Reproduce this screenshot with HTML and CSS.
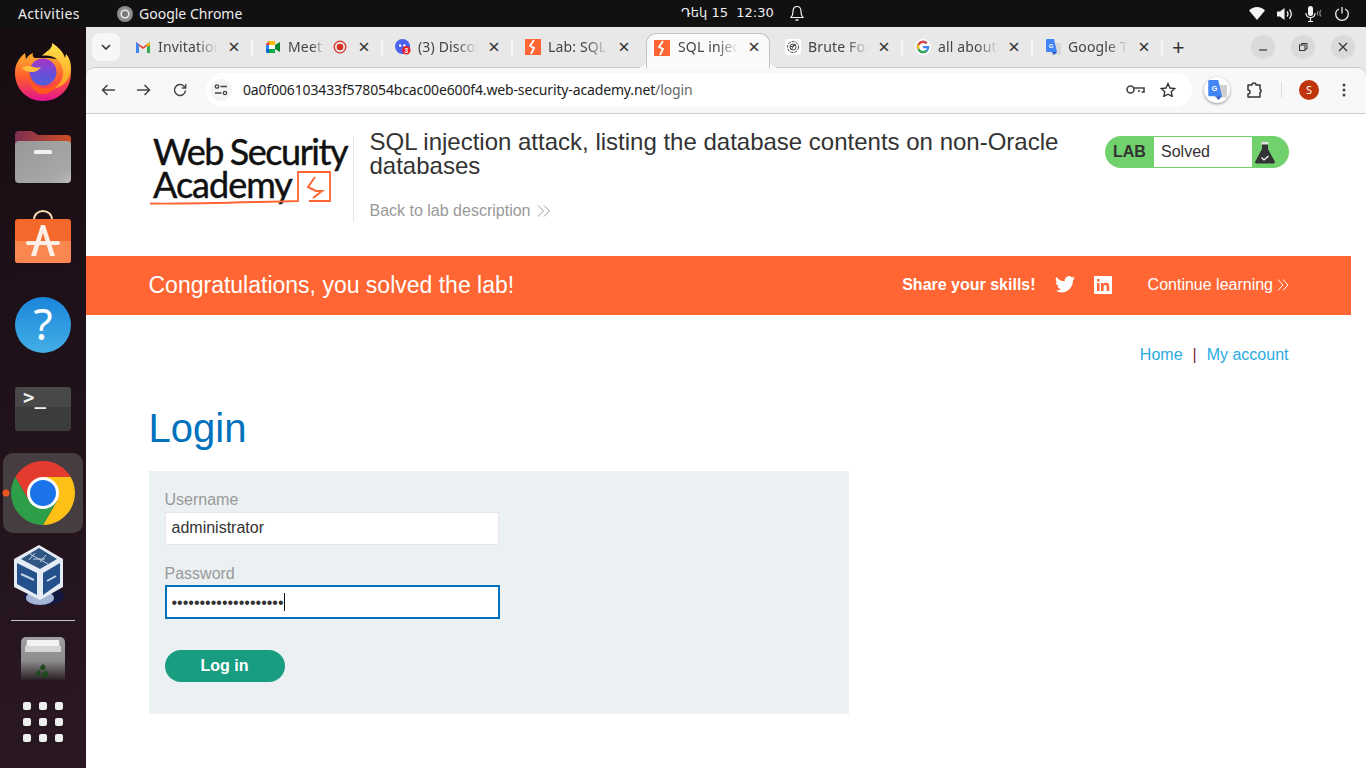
FILE: index.html
```html
<!DOCTYPE html>
<html lang="en">
<head>
<meta charset="utf-8">
<title>Login</title>
<link rel="stylesheet" href="styles.css">
</head>
<body>
<header class="topbar">
  <span class="activities">Activities</span>
  <svg class="appicon" width="16" height="16" viewBox="0 0 16 16"><circle cx="8" cy="8" r="8" fill="#8c8c8c"/><circle cx="8" cy="8" r="4.6" fill="#e8e8e8"/><circle cx="8" cy="8" r="3" fill="#777"/></svg>
  <span class="appname">Google Chrome</span>
  <span class="clock">Դեկ 15&nbsp;&nbsp;12:30</span>
  <svg class="bell" width="14" height="16" viewBox="0 0 14 16" fill="none" stroke="#f2f2f2" stroke-width="1.2"><path d="M1 12.5h12c-1.5-1.5-2-3-2-6C11 3.5 9.5 1.5 7 1.5S3 3.500 3 6.500c0 3-.5 4.500-2 6z"/><path d="M5.500 15h3" stroke-width="1.500"/></svg>
  <svg class="tray-wifi" width="16" height="13" viewBox="0 0 16 13"><path d="M0 3.500C2 1.500 5 0 8 0s6 1.500 8 3.500L8 13z" fill="#f5f5f5"/></svg>
  <svg class="tray-speaker" width="16" height="14" viewBox="0 0 16 14" fill="none" stroke="#f2f2f2" stroke-width="1.300"><path d="M0 4.500h3L7.500 1v12L3 9.500H0z" fill="#f2f2f2" stroke="none"/><path d="M10 4.500c1.200 1.500 1.200 3.500 0 5M12.500 2.500c2.200 2.700 2.200 6.300 0 9"/></svg>
  <svg class="tray-mic" width="18" height="16" viewBox="0 0 18 16" fill="none" stroke="#f2f2f2" stroke-width="1.200"><rect x="3" y="0" width="5" height="10" rx="2.500" fill="#f2f2f2" stroke="none"/><path d="M1 7c0 3 2 4.500 4.500 4.500S10 10 10 7M5.500 11.500V15M3 15.500h5"/><path d="M13 5c-1 1.500-1 3 0 4.500M16 4c-1.500 2-1.500 4.500 0 6.500" stroke="#888"/></svg>
  <svg class="tray-power" width="14" height="14" viewBox="0 0 14 14" fill="none" stroke="#f2f2f2" stroke-width="1.300"><path d="M7 0v6.500M4 2C1.800 3 .7 4.800.7 7a6.300 6.300 0 0 0 12.600 0c0-2.200-1.100-4-3.300-5"/></svg>
</header>

<div class="desktop">
  <nav class="dock">
    <div class="dock-item">
      <svg width="86" height="84" viewBox="0 0 86 84">
        <defs>
          <linearGradient id="fxbody" x1="0" y1="0" x2="0" y2="1"><stop offset="0" stop-color="#ffb02e"/><stop offset=".5" stop-color="#ff5d2e"/><stop offset="1" stop-color="#e3128f"/></linearGradient>
          <linearGradient id="fxflame" x1="0" y1="0" x2="0" y2="1"><stop offset="0" stop-color="#ffe14a"/><stop offset="1" stop-color="#ff9a1f"/></linearGradient>
          <linearGradient id="fxglobe" x1="0" y1="0" x2="0" y2="1"><stop offset="0" stop-color="#a733c9"/><stop offset=".55" stop-color="#6a4fd8"/><stop offset="1" stop-color="#4f5fd8"/></linearGradient>
        </defs>
        <path d="M15 43c0-8 3-14 10-20l1 6c2-3 4-5 7-6-1 3 0 4 2 5h14l18 3c3 4 4 8 4 12 0 16-12 28-28 28S15 59 15 43z" fill="url(#fxbody)"/>
        <path d="M52 13c1 6-6 8-10 13 10-2 20 4 21 15 1 8-4 14-10 18 10-2 18-10 18-21 0-6-2-11-5-14l-1 4c-2-7-7-11-13-15z" fill="url(#fxflame)"/>
        <circle cx="43" cy="42" r="13.500" fill="url(#fxglobe)"/>
        <path d="M22 38c4-3 9-2 12-1 2 1 4 1 7 0-2 3-5 5-9 5-4 0-7-1-10-4z" fill="#ffbe3a"/>
        <path d="M30 44c1 9 7 14 14 14 7 0 13-4 16-10-2 9-9 16-17 16s-15-9-13-20z" fill="#ff5722"/>
      </svg>
    </div>
    <div class="dock-item">
      <svg width="86" height="84" viewBox="0 0 86 84">
        <defs>
          <linearGradient id="fdback" x1="0" y1="0" x2="1" y2="0"><stop offset="0" stop-color="#7c2e52"/><stop offset="1" stop-color="#cf4e22"/></linearGradient>
          <linearGradient id="fdfront" x1="0" y1="0" x2="1" y2="1"><stop offset="0" stop-color="#979797"/><stop offset=".8" stop-color="#a8a8a8"/><stop offset="1" stop-color="#bdbdbd"/></linearGradient>
        </defs>
        <path d="M15 24v-3a4 4 0 0 1 4-4h13l6 4h29a4 4 0 0 1 4 4v10H15z" fill="url(#fdback)"/>
        <rect x="15" y="27" width="56" height="42" rx="4" fill="url(#fdfront)"/>
        <rect x="34" y="36" width="18" height="4" rx="1.500" fill="#f2f2f2"/>
      </svg>
    </div>
    <div class="dock-item">
      <svg width="86" height="84" viewBox="0 0 86 84">
        <path d="M34 22c0-12 18-12 18 0" fill="none" stroke="#f7dcae" stroke-width="2"/>
        <rect x="15" y="21" width="56" height="44" rx="3" fill="#f4692b"/>
        <path d="M15 43h56v19a3 3 0 0 1-3 3H18a3 3 0 0 1-3-3z" fill="#f9874f"/>
        <path d="M31 58 41 27h4l10 31h-5l-7-23-7 23z" fill="#fdeee6"/>
        <rect x="26" y="43" width="34" height="4" rx="2" fill="#fdeee6"/>
      </svg>
    </div>
    <div class="dock-item">
      <svg width="86" height="84" viewBox="0 0 86 84">
        <defs><linearGradient id="hp" x1="0" y1="0" x2="0" y2="1"><stop offset="0" stop-color="#1b86dc"/><stop offset="1" stop-color="#43aee4"/></linearGradient></defs>
        <circle cx="43" cy="43" r="28" fill="url(#hp)"/>
        <text class="help-mark" x="43" y="58">?</text>
      </svg>
    </div>
    <div class="dock-item">
      <svg width="86" height="84" viewBox="0 0 86 84">
        <rect x="15" y="21" width="56" height="44" rx="3" fill="#3c3c3c"/>
        <path d="M15 41V24a3 3 0 0 1 3-3h50a3 3 0 0 1 3 3v17z" fill="#484848"/>
        <text class="term-mark" x="23" y="38">&gt;_</text>
      </svg>
    </div>
    <div class="dock-item">
      <svg width="86" height="84" viewBox="0 0 86 84">
        <rect x="3" y="3" width="80" height="80" rx="10" fill="#463d41"/>
        <circle cx="6" cy="43" r="3.500" fill="#e95420"/>
        <path d="M70.700 27A32 32 0 0 0 15.300 27L29.100 51 43 27z" fill="#e33b2e"/>
        <path d="M70.700 27A32 32 0 0 1 43 75L56.900 51 43 27z" fill="#fcc016"/>
        <path d="M15.300 27A32 32 0 0 0 43 75L56.900 51H29.100z" fill="#2f9e48"/>
        <circle cx="43" cy="43" r="16" fill="#fff"/>
        <circle cx="43" cy="43" r="13" fill="#1a73e8"/>
      </svg>
    </div>
    <div class="dock-item">
      <svg width="86" height="84" viewBox="0 0 86 84">
        <ellipse cx="44" cy="62" rx="20" ry="9" fill="#0c1a52" opacity=".7"/>
        <ellipse cx="40" cy="64" rx="14" ry="7" fill="#a5b5d5"/>
        <path d="M39 11 63 25v28L40 66 14 53V25z" fill="#e6ecf6"/>
        <path d="M39 14 57 25 40 35 21 25z" fill="#2f5583"/>
        <path d="M17 29 37 39v22L17 50z" fill="#24508c"/>
        <path d="M43 39 60 29v20L43 61z" fill="#24508c"/>
        <path d="M30 20l18 10M35 19l-6 7M46 21l-6 7M33 25h12" stroke="#c4d2e6" stroke-width="1" fill="none"/>
        <path d="M21 40l13 6M47 47l9-5" stroke="#c4d2e6" stroke-width="2" fill="none"/>
      </svg>
    </div>
    <div class="dock-sep"></div>
    <div class="dock-trash">
      <svg width="86" height="44" viewBox="0 0 86 44">
        <defs><linearGradient id="trash" x1="0" y1="0" x2="0" y2="1"><stop offset="0" stop-color="#a0a0a0"/><stop offset=".55" stop-color="#8c8c8c"/><stop offset="1" stop-color="#2a2025"/></linearGradient></defs>
        <path d="M21 44V6a5 5 0 0 1 5-5h34a5 5 0 0 1 5 5v38z" fill="url(#trash)"/>
        <path d="M26 16 27 4h32l1 12z" fill="#f2f2f2"/>
        <path d="M25 10h36v6H25z" fill="#d6d6d6"/>
        <g fill="#1c4a1c"><path d="M40 31l3-3 3 3-2 3h-3z"/><path d="M35 39l3-5 3 2-2 4z"/><path d="M46 34l3 5-2 2h-5v-3z"/></g>
      </svg>
    </div>
    <div class="dock-grid">
      <i></i><i></i><i></i><i></i><i></i><i></i><i></i><i></i><i></i>
    </div>
  </nav>

  <div class="browser">
    <div class="tabstrip">
      <button class="tabmenu"><svg width="10" height="6" viewBox="0 0 10 6" fill="none" stroke="#333" stroke-width="1.600"><path d="M1 1l4 4 4-4"/></svg></button>
      <div class="tab sep">
        <svg class="fav" width="16" height="16" viewBox="0 0 16 16"><path d="M1 14V3l7 5 7-5v11h-3V7L8 10 4 7v7z" fill="#ea4335"/><path d="M1 14V3l3 2.200V14z" fill="#4285f4"/><path d="M12 14V5.200L15 3v11z" fill="#34a853"/><path d="M12 5.200 15 3v3l-3 2z" fill="#fbbc04"/></svg>
        <span class="tab-title">Invitation</span>
        <span class="tab-x">×</span>
      </div>
      <div class="tab sep">
        <svg class="fav" width="16" height="16" viewBox="0 0 16 16"><path d="M1 5 4 2h6v4H1z" fill="#ea4335"/><path d="M1 6h3v4H1z" fill="#2684fc"/><path d="M1 10h3v4H2.500A1.500 1.500 0 0 1 1 12.500z" fill="#0066da"/><path d="M4 10h6v4H4z" fill="#00ac47"/><path d="M4 2h5a1 1 0 0 1 1 1v3H4z" fill="#ffba00"/><path d="M10 6 15 3v10l-5-3z" fill="#00832d"/><rect x="4" y="6" width="6" height="4" fill="#fff"/></svg>
        <span class="tab-title short">Meet</span>
        <svg class="rec" width="14" height="14" viewBox="0 0 14 14"><circle cx="7" cy="7" r="5.800" fill="none" stroke="#d93025" stroke-width="1.300"/><circle cx="7" cy="7" r="3.300" fill="#d93025"/></svg>
        <span class="tab-x">×</span>
      </div>
      <div class="tab sep">
        <svg class="fav" width="16" height="16" viewBox="0 0 17 17"><circle cx="8" cy="8" r="8" fill="#4c62ee"/><ellipse cx="5.500" cy="7" rx="1.300" ry="1.500" fill="#fff"/><ellipse cx="10" cy="7" rx="1.300" ry="1.500" fill="#fff"/><circle cx="12" cy="12" r="4.500" fill="#e5202a"/><text class="badge-num" x="12" y="15">3</text></svg>
        <span class="tab-title">(3) Discord</span>
        <span class="tab-x">×</span>
      </div>
      <div class="tab">
        <svg class="fav" width="16" height="16" viewBox="0 0 16 16"><rect width="16" height="16" fill="#ff6633"/><path d="M9 1 5 7l4 2-3 6" fill="none" stroke="#fff" stroke-width="1.800"/></svg>
        <span class="tab-title">Lab: SQL</span>
        <span class="tab-x">×</span>
      </div>
      <div class="tab active">
        <svg class="fav" width="16" height="16" viewBox="0 0 16 16"><rect width="16" height="16" fill="#ff6633"/><path d="M9 1 5 7l4 2-3 6" fill="none" stroke="#fff" stroke-width="1.800"/></svg>
        <span class="tab-title">SQL injection</span>
        <span class="tab-x">×</span>
      </div>
      <div class="tab sep">
        <svg class="fav" width="16" height="16" viewBox="0 0 16 16"><rect width="16" height="16" rx="3" fill="#fff"/><g fill="none" stroke="#444" stroke-width="1"><circle cx="8" cy="8" r="5.500" stroke-dasharray="3 1"/><circle cx="8" cy="8" r="3"/><path d="M5 8l6-2M6 11l4-6"/></g></svg>
        <span class="tab-title">Brute Force</span>
        <span class="tab-x">×</span>
      </div>
      <div class="tab sep">
        <svg class="fav" width="16" height="16" viewBox="0 0 16 16"><circle cx="8" cy="8" r="8" fill="#fff"/><path d="M8 7v2.200h4A4.200 4.200 0 1 1 10.900 5L12.500 3.500A6.300 6.300 0 1 0 14.300 8c0-.4 0-.7-.1-1z" fill="#4285f4"/><path d="M2.600 5 4.500 6.300A4.200 4.200 0 0 1 10.900 5L12.500 3.500A6.300 6.300 0 0 0 2.600 5z" fill="#ea4335"/><path d="M2.600 5A6.300 6.300 0 0 0 2.600 11L4.500 9.700a4.200 4.200 0 0 1 0-3.400z" fill="#fbbc04"/><path d="M2.600 11A6.300 6.300 0 0 0 12.500 12.500L10.800 11A4.200 4.200 0 0 1 4.500 9.700z" fill="#34a853"/></svg>
        <span class="tab-title">all about</span>
        <span class="tab-x">×</span>
      </div>
      <div class="tab sep">
        <svg class="fav" width="16" height="16" viewBox="0 0 16 16"><rect x="6" y="4" width="10" height="12" fill="#d8d8d8"/><path d="M1 1a1 1 0 0 1 1-1h7l3 13H2a1 1 0 0 1-1-1z" fill="#4285f4"/><path d="M7 13h5l-3 3z" fill="#2a56c6"/><text class="g-mark" x="6" y="9">G</text></svg>
        <span class="tab-title">Google Translate</span>
        <span class="tab-x">×</span>
      </div>
      <span class="newtab">+</span>
      <div class="winbtns">
        <span class="winbtn"><svg width="10" height="10" viewBox="0 0 10 10"><path d="M1 8h8" stroke="#333" stroke-width="1.200"/></svg></span>
        <span class="winbtn"><svg width="10" height="10" viewBox="0 0 10 10" fill="none" stroke="#333" stroke-width="1"><rect x="1.500" y="3" width="5.500" height="5.500"/><path d="M3.500 3V1.500H9V7H7"/></svg></span>
        <span class="winbtn"><svg width="10" height="10" viewBox="0 0 10 10" stroke="#333" stroke-width="1.200"><path d="M1 1l8 8M9 1l-8 8"/></svg></span>
      </div>
    </div>

    <div class="toolbar">
      <svg class="navicon" width="14" height="12" viewBox="0 0 14 12" fill="none" stroke="#444" stroke-width="1.500"><path d="M14 6H1.500M6.500 1l-5 5 5 5"/></svg>
      <svg class="navicon" width="14" height="12" viewBox="0 0 14 12" fill="none" stroke="#444" stroke-width="1.500"><path d="M0 6h12.500M7.500 1l5 5-5 5"/></svg>
      <svg class="navicon" width="14" height="14" viewBox="0 0 14 14" fill="none" stroke="#444" stroke-width="1.500"><path d="M12.500 7.500A5.500 5.500 0 1 1 11 3.200L12.500 4.500"/><path d="M12.800 1v4h-4" stroke-width="1.300"/></svg>
      <div class="omnibox">
        <span class="tune"><svg width="14" height="12" viewBox="0 0 14 12" fill="none" stroke="#444" stroke-width="1.300"><circle cx="3" cy="2.500" r="1.700"/><path d="M6.500 2.500H13M1 9h6.500"/><circle cx="11" cy="9" r="1.700"/></svg></span>
        <span class="url">0a0f006103433f578054bcac00e600f4.web-security-academy.net<span class="url-path">/login</span></span>
        <svg class="omni-key" width="19" height="11" viewBox="0 0 19 11" fill="none" stroke="#444" stroke-width="1.600"><circle cx="4.500" cy="5.500" r="3.500"/><path d="M8 4h10v4h-2.500M13 8V6"/></svg>
        <svg class="omni-star" width="16" height="15" viewBox="0 0 16 15" fill="none" stroke="#333" stroke-width="1.400"><path d="M8 1.500l2 4.500 4.800.5-3.600 3.200 1 4.700L8 12.200 3.800 14.400l1-4.700L1.200 6.500 6 6z"/></svg>
      </div>
      <span class="translate-ext"><svg width="20" height="20" viewBox="0 0 16 16"><rect x="6" y="4" width="10" height="10" fill="#d0d0d0"/><path d="M1 1a1 1 0 0 1 1-1h7l3 13H2a1 1 0 0 1-1-1z" fill="#4285f4"/><path d="M7 13h5l-3 3z" fill="#2a56c6"/><text class="g-mark" x="6" y="9">G</text></svg></span>
      <svg class="puzzle" width="18" height="18" viewBox="0 0 18 18" fill="none" stroke="#333" stroke-width="1.500"><path d="M2 4h4a2 2 0 0 1 4 0h4v4a2 2 0 0 1 0 3.500V16H2v-3a2 2 0 0 0 0-4z" stroke-linejoin="round"/></svg>
      <span class="tool-sep"></span>
      <span class="avatar">S</span>
      <svg class="kebab" width="4" height="14" viewBox="0 0 4 14" fill="#444"><circle cx="2" cy="2" r="1.500"/><circle cx="2" cy="7" r="1.500"/><circle cx="2" cy="12" r="1.500"/></svg>
    </div>

    <div class="viewport">
      <main class="page">
        <section class="labhead">
          <div class="logo">
            <div class="logo-line">Web Security</div>
            <div class="logo-line wide">Academy</div>
            <svg class="logo-mark" width="204" height="72" viewBox="0 0 204 72" fill="none" stroke="#ff6633">
              <path d="M1 67.500C50 68 100 66 149 65V36h32v29h-21" stroke-width="1.800"/>
              <path d="M166 41l-7 10 8 4 6 0-9 7" stroke-width="2"/>
            </svg>
          </div>
          <div class="labinfo">
            <h2 class="labtitle">SQL injection attack, listing the database contents on non-Oracle databases</h2>
            <a class="backlink">Back to lab description
              <svg width="14" height="12" viewBox="0 0 14 12" fill="none" stroke="#999" stroke-width="1"><path d="M1 .5 6.500 6 1 11.500M7 .5 12.500 6 7 11.500"/></svg>
            </a>
          </div>
          <div class="status">
            <span class="status-lab">LAB</span>
            <span class="status-val">Solved</span>
            <span class="status-icon">
              <svg width="20" height="22" viewBox="0 0 20 22"><path d="M7 2h6v5l6.500 12a1.500 1.500 0 0 1-1.300 2.500H1.800A1.500 1.500 0 0 1 .5 19L7 7z" fill="#333"/><rect x="6.500" y="0" width="7" height="2.500" fill="#e4e4e4"/><path d="M6.500 15.500l2.500 2.500 4.500-4" fill="none" stroke="#fff" stroke-width="1.200"/></svg>
            </span>
          </div>
        </section>

        <section class="banner">
          <h4 class="banner-msg">Congratulations, you solved the lab!</h4>
          <div class="banner-right">
            <span class="share">Share your skills!</span>
            <svg class="tw" width="20" height="17" viewBox="0 0 24 20" fill="#fff"><path d="M24 2.400a10 10 0 0 1-2.800.8A5 5 0 0 0 23.300.5a10 10 0 0 1-3.100 1.200 4.900 4.900 0 0 0-8.400 4.500A14 14 0 0 1 1.700.9a4.900 4.900 0 0 0 1.500 6.600 4.900 4.900 0 0 1-2.200-.6c0 2.400 1.700 4.400 3.900 4.900a5 5 0 0 1-2.200.1 4.900 4.900 0 0 0 4.600 3.400A10 10 0 0 1 0 17.300 14 14 0 0 0 7.500 19.500c9.100 0 14.300-7.700 14-14.600A10 10 0 0 0 24 2.400z"/></svg>
            <svg class="li" width="18" height="18" viewBox="0 0 18 18"><rect width="18" height="18" rx="1" fill="#fff"/><path d="M3 7h2.500v8H3zM3 3h2.500v2.500H3zM7 7h2.400v1.200C10 7.300 11 6.800 12.200 6.800c2.200 0 3 1.400 3 3.700V15h-2.500v-4c0-1.200-.4-2-1.400-2s-1.700.8-1.700 2v4H7z" fill="#ff6633"/></svg>
            <a class="continue">Continue learning
              <svg width="12" height="12" viewBox="0 0 12 12" fill="none" stroke="#fff" stroke-width="1"><path d="M1 .5 6 6l-5 5.500M6 .5 11 6l-5 5.500"/></svg>
            </a>
          </div>
        </section>

        <div class="content">
          <nav class="pagenav"><a>Home</a><span class="pipe">|</span><a>My account</a></nav>
          <h1 class="pagetitle">Login</h1>
          <form class="loginform">
            <label class="field-label">Username</label>
            <div class="input">administrator</div>
            <label class="field-label second">Password</label>
            <div class="input focused">••••••••••••••••••••<span class="caret"></span></div>
            <button class="loginbtn" type="button">Log in</button>
          </form>
        </div>
      </main>
    </div>
  </div>
</div>
</body>
</html>
```
FILE: styles.css
```css
* { box-sizing: border-box; }
html, body { margin: 0; height: 100%; overflow: hidden; }
body { width: 1366px; height: 768px; background: #fff; font-family: "Liberation Sans", Arial, sans-serif; display: flex; flex-direction: column; }

.topbar { height: 27px; background: #111; color: #eee; display: flex; align-items: center; flex: none; font-family: "Noto Sans", "DejaVu Sans", sans-serif; font-size: 14px; }
.activities { margin-left: 18px; width: 99px; letter-spacing: .35px; }
.appicon { flex: none; }
.appname { margin-left: 6px; width: 542px; }
.clock { width: 109px; font-family: "DejaVu Sans", sans-serif; font-size: 13px; white-space: nowrap; margin-top: -2px; }
.bell { margin-left: 0; width: 14px; margin-top: -2px; }
.tray-wifi { margin-left: 445px; }
.tray-speaker { margin-left: 12px; }
.tray-mic { margin-left: 12px; }
.tray-power { margin-left: 12px; }

.desktop { flex: 1; display: flex; min-height: 0; }
.dock { width: 86px; flex: none; background: linear-gradient(170deg, #170c12, #2a1822); display: flex; flex-direction: column; padding-top: 3px; }
.dock-item { height: 84px; flex: none; }
.dock-item svg, .dock-trash svg { display: block; }
.dock-sep { height: 1px; margin: 2px 11px 0; background: #c9c5c7; flex: none; }
.dock-trash { margin-top: 15px; height: 44px; flex: none; }
.dock-grid { margin: 22px 0 0 23px; display: grid; grid-template-columns: repeat(3, 8px); gap: 8px; }
.dock-grid i { display: block; width: 8px; height: 8px; border-radius: 2px; background: #eeeeec; }
.help-mark { font: normal 44px "Noto Sans", sans-serif; fill: #fff; text-anchor: middle; }
.term-mark { font: bold 19px "DejaVu Sans Mono", monospace; fill: #eee; }
.badge-num { font: bold 7px "Liberation Sans", sans-serif; fill: #fff; text-anchor: middle; }
.g-mark { font: bold 6px "Liberation Sans", sans-serif; fill: #fff; text-anchor: middle; }

.browser { flex: 1; display: flex; flex-direction: column; min-width: 0; background: #e8e8e8; }
.tabstrip { height: 40px; flex: none; display: flex; align-items: flex-end; padding-left: 6px; font-family: "Noto Sans", sans-serif; font-size: 14px; color: #444; position: relative; z-index: 1; }
.tabmenu { width: 28px; height: 28px; margin: 0 3px 6px 0; border: 0; border-radius: 8px; background: #f7f7f7; display: flex; align-items: center; justify-content: center; padding: 0; flex: none; }
.tab { width: 130px; height: 34px; flex: none; display: flex; align-items: center; padding: 0 0 0 12px; position: relative; }
.tab.sep::after { content: ""; position: absolute; right: 0; top: 7px; width: 2px; height: 16px; background: #f6f6f6; }
.tab.active { background: #fafafa; border: 1px solid #c4c4c4; border-bottom: 0; border-radius: 10px 10px 0 0; width: 124px; height: 35px; margin: 0 3px -1px; padding: 0 0 1px 7px; z-index: 2; }
.tab.active::before { content: ""; position: absolute; left: -9px; bottom: 0; width: 8px; height: 8px; background: radial-gradient(circle at 0 0, transparent 7.500px, #fafafa 8px); }
.tab.active::after { content: ""; position: absolute; right: -9px; bottom: 0; width: 8px; height: 8px; background: radial-gradient(circle at 100% 0, transparent 7.500px, #fafafa 8px); }
.fav { flex: none; margin-top: -6px; }
.tab-title { width: 60px; margin-left: 7px; margin-top: -8px; overflow: hidden; white-space: nowrap; letter-spacing: .15px; -webkit-mask-image: linear-gradient(90deg, #000 65%, transparent); mask-image: linear-gradient(90deg, #000 65%, transparent); flex: none; }
.tab.active .tab-title { margin-left: 8px; }
.tab-title.short { width: 37px; }
.rec { margin: -6px 0 0 8px; flex: none; }
.tab-x { font-size: 20px; line-height: 20px; color: #333; margin: -7px 0 0 10px; width: 12px; text-align: center; flex: none; }
.tab .rec + .tab-x { margin-left: 11px; }
.newtab { font-size: 22px; line-height: 22px; color: #333; margin: 0 0 10px 9px; width: 12px; text-align: center; flex: none; }
.winbtns { margin-left: auto; margin-right: 11px; margin-bottom: 8px; display: flex; gap: 16px; }
.winbtn { width: 24px; height: 24px; border-radius: 50%; background: #dadada; display: flex; align-items: center; justify-content: center; }

.toolbar { height: 47px; flex: none; background: #f8f8f8; border-top: 1px solid #c6c6c6; border-bottom: 1px solid #cfcfcf; border-radius: 9px 9px 0 0; display: flex; align-items: center; padding: 0 0 2px 15px; }
.navicon { flex: none; margin-right: 22px; }
.navicon:nth-child(3) { margin-right: 19px; }
.omnibox { width: 986px; height: 34px; border-radius: 17px; background: #fff; display: flex; align-items: center; padding-left: 2px; flex: none; font-family: "Noto Sans", sans-serif; font-size: 14px; }
.tune { width: 22px; height: 22px; margin-left: 2px; display: flex; align-items: center; justify-content: center; border-radius: 50%; background: #f4f4f4; flex: none; }
.url { margin-left: 11px; color: #222; white-space: nowrap; flex: none; width: 883px; letter-spacing: -.14px; }
.url-path { color: #666; }
.omni-key { flex: none; margin-left: 0; }
.omni-star { flex: none; margin-left: 15px; }
.translate-ext { width: 26px; height: 26px; margin-left: 12px; border-radius: 50%; background: #fff; box-shadow: 0 1px 3px rgba(0,0,0,.4); display: flex; align-items: center; justify-content: center; flex: none; }
.puzzle { margin-left: 16px; flex: none; }
.tool-sep { width: 1px; height: 16px; background: #ddd; margin-left: 17px; flex: none; }
.avatar { width: 20px; height: 20px; margin-left: 17px; border-radius: 50%; background: #c0360c; color: #fff; font: 11px/20px "Noto Sans", sans-serif; text-align: center; flex: none; }
.kebab { margin-left: 23px; flex: none; }

.viewport { flex: 1; min-height: 0; background: #fff; overflow: hidden; position: relative; }
.page { width: 1265px; background: #fff; color: #333; }

.labhead { height: 142px; padding: 22px 62px 0 63px; display: flex; align-items: flex-start; }
.logo { width: 205px; height: 86px; border-right: 1px solid #e6e6e6; position: relative; flex: none; padding: 0 0 0 4px; font-family: Lato, sans-serif; font-size: 36px; line-height: 30px; color: #111; letter-spacing: -1.450px; word-spacing: -1px; white-space: nowrap; -webkit-text-stroke: .45px #111; }
.logo-line { height: 33px; }
.logo-line.wide { letter-spacing: -1px; }
.logo-mark { position: absolute; left: 0; top: 0; }
.labinfo { flex: none; width: 735px; padding-left: 15.500px; margin-top: -6px; }
.labtitle { margin: 0; font-size: 24px; line-height: 24px; font-weight: normal; color: #333; }
.backlink { display: flex; align-items: center; gap: 7px; margin-top: 24px; font-size: 16px; line-height: 18px; color: #999; }
.status { margin-left: auto; width: 184px; height: 32px; background: #70d16d; border-radius: 16px; display: flex; align-items: center; padding: 1px 0; flex: none; }
.status-lab { width: 49px; padding-left: 8px; font-size: 16px; font-weight: bold; color: #333; }
.status-val { width: 98px; height: 30px; background: #fff; padding-left: 7px; font-size: 16px; line-height: 29px; color: #333; }
.status-icon { flex: 1; display: flex; justify-content: center; padding-right: 11px; padding-top: 1px; }

.banner { height: 59px; background: #ff6633; color: #fff; display: flex; align-items: center; justify-content: space-between; padding: 0 62px 2px 62.500px; }
.banner-msg { margin: 0; font-size: 23px; font-weight: normal; margin-top: 2px; }
.banner-right { display: flex; align-items: center; font-size: 16px; }
.share { font-weight: bold; margin-left: 1px; }
.tw { margin-left: 19px; }
.li { margin-left: 19.500px; }
.continue { margin-left: 35.500px; display: flex; align-items: center; gap: 4px; }

.content { padding: 0 62.500px 0 62.500px; }
.pagenav { padding-top: 30px; height: 64px; display: flex; justify-content: flex-end; font-size: 16px; line-height: 19px; color: #29abe2; }
.pipe { color: #7a1f3d; margin: 0 10px; }
.pagetitle { margin: 25px 0 19px; font-size: 40px; line-height: 48px; font-weight: normal; color: #0071bc; }
.loginform { width: 700px; height: 243px; background: #ebf0f2; padding: 19px 16px 0; display: flex; flex-direction: column; align-items: flex-start; }
.field-label { font-size: 16px; line-height: 19px; color: #999; height: 22px; }
.field-label.second { margin-top: 19px; height: 21px; }
.input { width: 334px; height: 33px; background: #fff; border: 1px solid #e6e6e6; padding-left: 6px; font-size: 16px; line-height: 29px; color: #333; white-space: nowrap; }
.input.focused { width: 335px; height: 34px; border: 2px solid #0071bc; padding-left: 5px; display: flex; align-items: center; }
.caret { width: 1px; height: 18px; background: #111; margin-left: 0; }
.loginbtn { margin-top: 31px; width: 120px; height: 32px; border: 0; border-radius: 16px; background: #189d80; color: #fff; font: bold 16px "Liberation Sans", sans-serif; }
```
